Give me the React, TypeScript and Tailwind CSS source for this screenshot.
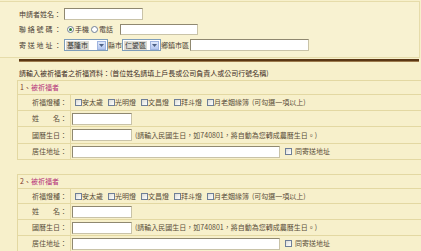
import React from "react";

const Box = ({ w, h = 12 }: { w: number; h?: number }) => (
  <div
    className="shrink-0 bg-white border border-t-[#8f8870] border-l-[#8f8870] border-r-[#c9c3a8] border-b-[#c9c3a8]"
    style={{ width: w, height: h }}
  />
);

const Check = ({ className = "" }: { className?: string }) => (
  <span
    className={
      "inline-block shrink-0 w-[7px] h-[7px] border border-[#6f7f97] bg-gradient-to-br from-[#dcdcd6] to-white " +
      className
    }
  />
);

const Radio = ({ on = false }: { on?: boolean }) => (
  <span className="inline-flex shrink-0 items-center justify-center w-[7px] h-[7px] rounded-full border border-[#6f7f97] bg-white">
    {on && <span className="block w-[3px] h-[3px] rounded-full bg-[#2f7a2f]" />}
  </span>
);

const Select = ({ w, text }: { w: number; text: string }) => (
  <div
    className="shrink-0 h-[12px] flex items-center border border-[#7f9db9] bg-white"
    style={{ width: w }}
  >
    <span className="ml-[1px] px-[1px] h-[9px] flex items-center bg-[#dcdad2] text-[#333] whitespace-nowrap">{text}</span>
    <span className="ml-auto mr-[1px] w-[9px] h-[9px] flex items-center justify-center bg-gradient-to-b from-[#dfe8fb] to-[#b3c6ef] border border-[#9fb4e0]">
      <svg width="5" height="3" viewBox="0 0 5 3">
        <path d="M0 0 L5 0 L2.5 3 Z" fill="#4d6185" />
      </svg>
    </span>
  </div>
);

const Row = ({ label, children, h = 16 }: { label: string; children?: React.ReactNode; h?: number }) => (
  <div className="flex border-b border-[#e3d8a2]" style={{ height: h }}>
    <div className="w-[53px] shrink-0 flex items-center justify-end pr-[3px] border-r border-[#e3d8a2] text-[#5a4e3a] whitespace-nowrap">
      {label}
    </div>
    <div className="flex-1 flex items-center pl-[1px] whitespace-nowrap">{children}</div>
  </div>
);

const Lamp = ({ t, first = false }: { t: string; first?: boolean }) => (
  <span className={"flex items-center " + (first ? "ml-[3px]" : "ml-[5px]")}>
    <Check />
    <span className="text-[#5a4e3a]">{t}</span>
  </span>
);

const Section = ({ n, h = [14, 16, 16, 17, 16] }: { n: number; h?: number[] }) => (
  <div className="ml-[17px] border-l border-t border-[#e3d8a2]">
    <div className="flex items-center pl-[2px] border-b border-[#e3d8a2]" style={{ height: h[0] }}>
      <span className="text-[#7e3a2c]">{n}、</span>
      <span className="text-[#b5307a]">被祈福者</span>
    </div>
    <Row label="祈福燈種：" h={h[1]}>
      <Lamp t="安太歲" first />
      <Lamp t="光明燈" />
      <Lamp t="文昌燈" />
      <Lamp t="拜斗燈" />
      <Lamp t="月老姻緣簿" />
      <span className="ml-[3px] text-[#5a4e3a]">(可勾選一項以上)</span>
    </Row>
    <Row label="姓　　名：" h={h[2]}>
      <Box w={60} />
    </Row>
    <Row label="國曆生日：" h={h[3]}>
      <Box w={60} />
      <span className="ml-[3px] text-[#5a4e3a]">(請輸入民國生日，如740801，將自動為您轉成農曆生日。)</span>
    </Row>
    <Row label="居住地址：" h={h[4]}>
      <Box w={208} />
      <Check className="ml-[5px]" />
      <span className="ml-[3px] text-[#5a4e3a]">同寄送地址</span>
    </Row>
  </div>
);

export default function App() {
  return (
    <div className="w-[421px] h-[251px] overflow-hidden bg-[#f7f0cb] text-[7px] leading-none font-['Noto_Sans_CJK_TC','Noto_Sans',sans-serif]">
      {/* top panel */}
      <div className="mt-[1px] w-[420px] h-[57px] border-t border-b border-r border-[#e6dcaa] bg-[#f8f2d1] pt-[6px] pl-[19px] whitespace-nowrap">
        <div className="flex items-center h-[12px]">
          <span className="w-[45px] shrink-0 text-[#4a4034]">申請者姓名：</span>
          <Box w={79} />
        </div>
        <div className="flex items-center h-[12px] mt-[3px]">
          <span className="w-[45px] shrink-0 tracking-[1.8px] text-[#4a4034]">聯絡號碼：</span>
          <span className="ml-[3px] flex items-center">
            <Radio on />
            <span className="ml-[1px] text-[#4a4034]">手機</span>
          </span>
          <span className="ml-[2px] flex items-center">
            <Radio />
            <span className="ml-[1px] text-[#4a4034]">電話</span>
          </span>
          <span className="ml-[7px]">
            <Box w={78} h={11} />
          </span>
        </div>
        <div className="flex items-center h-[12px] mt-[4px]">
          <span className="w-[45px] shrink-0 tracking-[1.8px] text-[#4a4034]">寄送地址：</span>
          <Select w={44} text="基隆市" />
          <span className="text-[#4a4034]">縣市</span>
          <Select w={39} text="仁愛區" />
          <span className="text-[#4a4034]">鄉鎮市區</span>
          <span className="ml-[1px]">
            <Box w={119} />
          </span>
        </div>
      </div>
      {/* dark rule */}
      <div className="ml-[19px] w-[400px] mt-[1px] h-[3px] bg-[#5b3714] border-b border-[#9c7a4c]" />
      <div className="h-[18px] pl-[19px] pt-[5px] flex items-center text-[#3b2a1e] whitespace-nowrap">
        請輸入被祈福者之祈福資料：(首位姓名請填上戶長或公司負責人或公司行號名稱)
      </div>
      <Section n={1} />
      <div className="h-[14px]" />
      <Section n={2} h={[14, 15, 16, 16, 16]} />
    </div>
  );
}
